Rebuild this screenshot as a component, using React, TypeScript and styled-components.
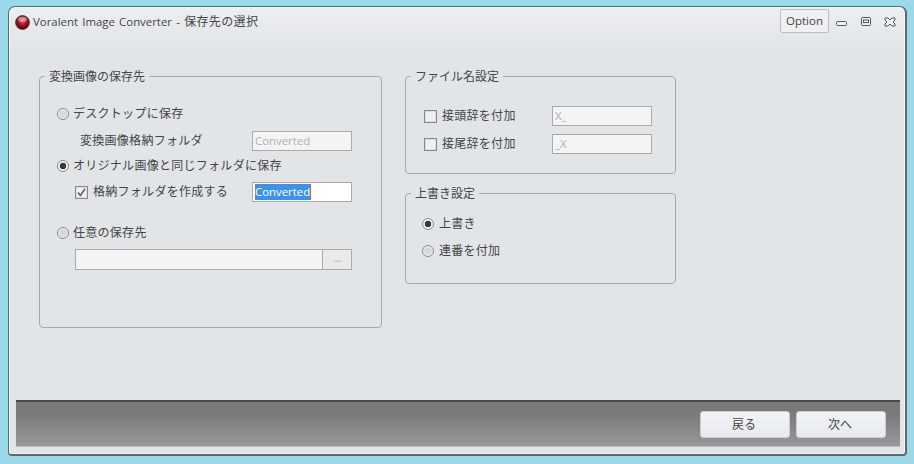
import React from "react";
import styled, { createGlobalStyle } from "styled-components";

const Global = createGlobalStyle`
  html, body { margin: 0; padding: 0; height: 100%; }
  body {
    background: #9bd9ea;
    font-family: "Noto Sans CJK JP", "Noto Sans", sans-serif;
    overflow: hidden;
  }
`;

const Page = styled.div`
  width: 914px;
  height: 464px;
  padding: 6px 7px 8px 8px;
  box-sizing: border-box;
`;

const Win = styled.div`
  width: 899px;
  height: 450px;
  box-sizing: border-box;
  border: 1px solid #5c6a70;
  border-width: 1px 2px 2px 1px;
  border-radius: 7px 7px 4px 4px;
  background: linear-gradient(#eceef0 0, #e2e5e8 40px, #e1e5e8 100%);
  display: flex;
  flex-direction: column;
  box-shadow: inset 0 0 0 1px #f4f5f6;
`;

const TitleBar = styled.header`
  height: 29px;
  display: flex;
  align-items: center;
  padding: 0 0 0 6px;
  flex: none;
`;

const Logo = styled.svg`
  width: 15px;
  height: 15px;
  flex: none;
  margin: 1px 3px 0 0;
`;

const Title = styled.div`
  flex: 1;
  font-size: 12px;
  line-height: 16px;
  color: #444;
  letter-spacing: 0.35px;
  white-space: nowrap;
  margin-bottom: 1px;
`;

const TitleLatin = styled.span`
  font-family: "Open Sans", sans-serif;
  font-size: 11.4px;
  letter-spacing: 0;
  word-spacing: 1.3px;
`;

const OptionButton = styled.button`
  width: 49px;
  height: 24px;
  box-sizing: border-box;
  margin: -1px 0 0 0;
  padding: 0 0 2px 0;
  border: 1px solid #b8bec2;
  border-radius: 2px;
  background: #eef0f2;
  color: #444;
  font: 11.5px "Open Sans", sans-serif;
`;

const WinButtons = styled.div`
  display: flex;
  align-items: center;
  gap: 12px;
  margin: 1px 9px 0 7px;
`;

const WinIcon = styled.svg`
  width: 12px;
  height: 12px;
  display: block;
`;

const Main = styled.main`
  flex: 1;
  display: flex;
  align-items: flex-start;
  gap: 23px;
  padding: 32px 0 0 30px;
  min-height: 0;
`;

const Column = styled.div<{ $w: number }>`
  width: ${(p) => p.$w}px;
  display: flex;
  flex-direction: column;
  gap: 11px;
`;

const Group = styled.fieldset<{ $h: number }>`
  margin: 0;
  padding: 0;
  min-width: 0;
  height: ${(p) => p.$h}px;
  box-sizing: border-box;
  border: 1px solid #a6aaad;
  border-radius: 4px;
`;

const Legend = styled.legend`
  margin-left: 5px;
  padding: 0 4px 2px;
  font-size: 12px;
  line-height: 15px;
  color: #444;
  white-space: nowrap;
`;

const Row = styled.div<{ $indent: number; $top: number }>`
  display: flex;
  align-items: center;
  height: 20px;
  margin-left: ${(p) => p.$indent}px;
  margin-top: ${(p) => p.$top}px;
`;

const Label = styled.span<{ $w?: number }>`
  font-size: 12px;
  line-height: 18px;
  margin-bottom: 2px;
  color: #444;
  letter-spacing: 0.28px;
  white-space: nowrap;
  ${(p) => (p.$w ? `width: ${p.$w}px; flex: none;` : "")}
`;

const RadioMark = styled.span<{ $on?: boolean; $gap: number }>`
  width: 12px;
  height: 12px;
  box-sizing: border-box;
  flex: none;
  margin-right: ${(p) => p.$gap}px;
  border-radius: 50%;
  border: 1px solid #85898c;
  background: ${(p) =>
    p.$on
      ? "radial-gradient(circle, #3a3a3a 0 3px, #f2f3f4 3.6px)"
      : "radial-gradient(circle, #d6d8d9 0 3px, #e3e5e6 4px, #f4f5f6 5px)"};
`;

const CheckMark = styled.span`
  width: 13px;
  height: 13px;
  box-sizing: border-box;
  flex: none;
  margin-right: 5px;
  border: 1px solid #85898c;
  background: #eff0f1;
  box-shadow: inset 0 0 0 1px #dcddde;
  display: flex;
  align-items: center;
  justify-content: center;
`;

const TextBox = styled.div<{ $active?: boolean }>`
  width: 100px;
  height: 20px;
  box-sizing: border-box;
  flex: none;
  border: 1px solid #a9abad;
  background: ${(p) => (p.$active ? "#fff" : "#f4f4f4")};
  padding-left: 2px;
  font: 11.4px/18px "Open Sans", sans-serif;
  color: ${(p) => (p.$active ? "#fff" : "#b0b0b0")};
  white-space: nowrap;
`;

const Selected = styled.span`
  display: inline-block;
  background: #3c92e6;
  height: 16px;
  line-height: 16px;
  vertical-align: top;
  margin-top: 1px;
  border-right: 1px solid #c5682a;
`;

const PathField = styled.div`
  display: flex;
  width: 277px;
  height: 21px;
  box-sizing: border-box;
  border: 1px solid #a9abad;
  background: #f4f4f4;
`;

const PathInput = styled.div`
  flex: 1;
`;

const BrowseButton = styled.div`
  width: 29px;
  box-sizing: border-box;
  border-left: 1px solid #a9abad;
  background: #eaeaea;
  color: #999;
  font: 10px/16px "Open Sans", sans-serif;
  text-align: center;
`;

const Footer = styled.footer`
  flex: none;
  height: 47px;
  margin: 0 5px 7px 7px;
  box-sizing: border-box;
  background: linear-gradient(#7a7b7d 0, #79797b 10px, #98989b 100%);
  border-top: 2px solid #48494a;
  border-bottom: 1px solid #bcbdbf;
  display: flex;
  justify-content: flex-end;
  align-items: flex-start;
  gap: 6px;
  padding: 9px 14px 0 0;
`;

const NavButton = styled.button`
  width: 90px;
  height: 27px;
  padding: 0 2px 2px 0;
  box-sizing: border-box;
  border: 1px solid #c9cdd1;
  border-radius: 3px;
  background: linear-gradient(#f2f3f5, #e7eaee);
  color: #444;
  font: 12px "Noto Sans CJK JP", sans-serif;
`;

const Radio = ({
  on,
  gap = 4,
  children,
}: {
  on?: boolean;
  gap?: number;
  children: React.ReactNode;
}) => (
  <>
    <RadioMark $on={on} $gap={gap} />
    <Label>{children}</Label>
  </>
);

export default function App() {
  return (
    <Page>
      <Global />
      <Win>
        <TitleBar>
          <Logo viewBox="0 0 16 16">
            <defs>
              <radialGradient id="orb" cx="50%" cy="35%" r="65%">
                <stop offset="0" stopColor="#e8606c" />
                <stop offset="0.55" stopColor="#a3101f" />
                <stop offset="1" stopColor="#3a0a10" />
              </radialGradient>
            </defs>
            <circle cx="8" cy="8" r="7.4" fill="url(#orb)" stroke="#333" strokeWidth="0.8" />
            <ellipse cx="8" cy="4.8" rx="4.6" ry="2.6" fill="#fff" opacity="0.4" />
          </Logo>
          <Title>
            <TitleLatin>Voralent Image Converter - </TitleLatin>保存先の選択
          </Title>
          <OptionButton>Option</OptionButton>
          <WinButtons>
            <WinIcon viewBox="0 0 12 12">
              <rect x="0.5" y="5.5" width="10" height="4" rx="1" fill="#eef0f2" stroke="#4c5a62" />
            </WinIcon>
            <WinIcon viewBox="0 0 12 12">
              <rect x="1.5" y="1.5" width="9" height="8" rx="1" fill="#eef0f2" stroke="#4c5a62" />
              <rect x="3.5" y="4" width="5" height="2.6" fill="none" stroke="#4c5a62" />
            </WinIcon>
            <WinIcon viewBox="0 0 12 12">
              <path
                d="M1 2h3l2 2 2-2h3v2L9 6l2 2v2H8L6 8l-2 2H1V8l2-2-2-2z"
                fill="#eef0f2"
                stroke="#4c5a62"
              />
            </WinIcon>
          </WinButtons>
        </TitleBar>
        <Main>
          <Column $w={343}>
            <Group $h={260}>
              <Legend>変換画像の保存先</Legend>
              <Row $indent={17} $top={19}>
                <Radio>デスクトップに保存</Radio>
              </Row>
              <Row $indent={40} $top={7}>
                <Label $w={172}>変換画像格納フォルダ</Label>
                <TextBox>Converted</TextBox>
              </Row>
              <Row $indent={17} $top={5}>
                <Radio on>オリジナル画像と同じフォルダに保存</Radio>
              </Row>
              <Row $indent={35} $top={6}>
                <CheckMark>
                  <svg width="11" height="11" viewBox="0 0 11 11">
                    <path d="M2 5.5l2.4 3L9 1.6" fill="none" stroke="#555" strokeWidth="1.4" />
                  </svg>
                </CheckMark>
                <Label $w={159}>格納フォルダを作成する</Label>
                <TextBox $active>
                  <Selected>Converted</Selected>
                </TextBox>
              </Row>
              <Row $indent={17} $top={21}>
                <Radio>任意の保存先</Radio>
              </Row>
              <Row $indent={35} $top={6}>
                <PathField>
                  <PathInput />
                  <BrowseButton>...</BrowseButton>
                </PathField>
              </Row>
            </Group>
          </Column>
          <Column $w={271}>
            <Group $h={106}>
              <Legend>ファイル名設定</Legend>
              <Row $indent={18} $top={21}>
                <CheckMark />
                <Label $w={110}>接頭辞を付加</Label>
                <TextBox>X_</TextBox>
              </Row>
              <Row $indent={18} $top={8}>
                <CheckMark />
                <Label $w={110}>接尾辞を付加</Label>
                <TextBox>_X</TextBox>
              </Row>
            </Group>
            <Group $h={99}>
              <Legend>上書き設定</Legend>
              <Row $indent={16} $top={12}>
                <Radio on gap={5}>上書き</Radio>
              </Row>
              <Row $indent={16} $top={7}>
                <Radio gap={5}>連番を付加</Radio>
              </Row>
            </Group>
          </Column>
        </Main>
        <Footer>
          <NavButton>戻る</NavButton>
          <NavButton>次へ</NavButton>
        </Footer>
      </Win>
    </Page>
  );
}
